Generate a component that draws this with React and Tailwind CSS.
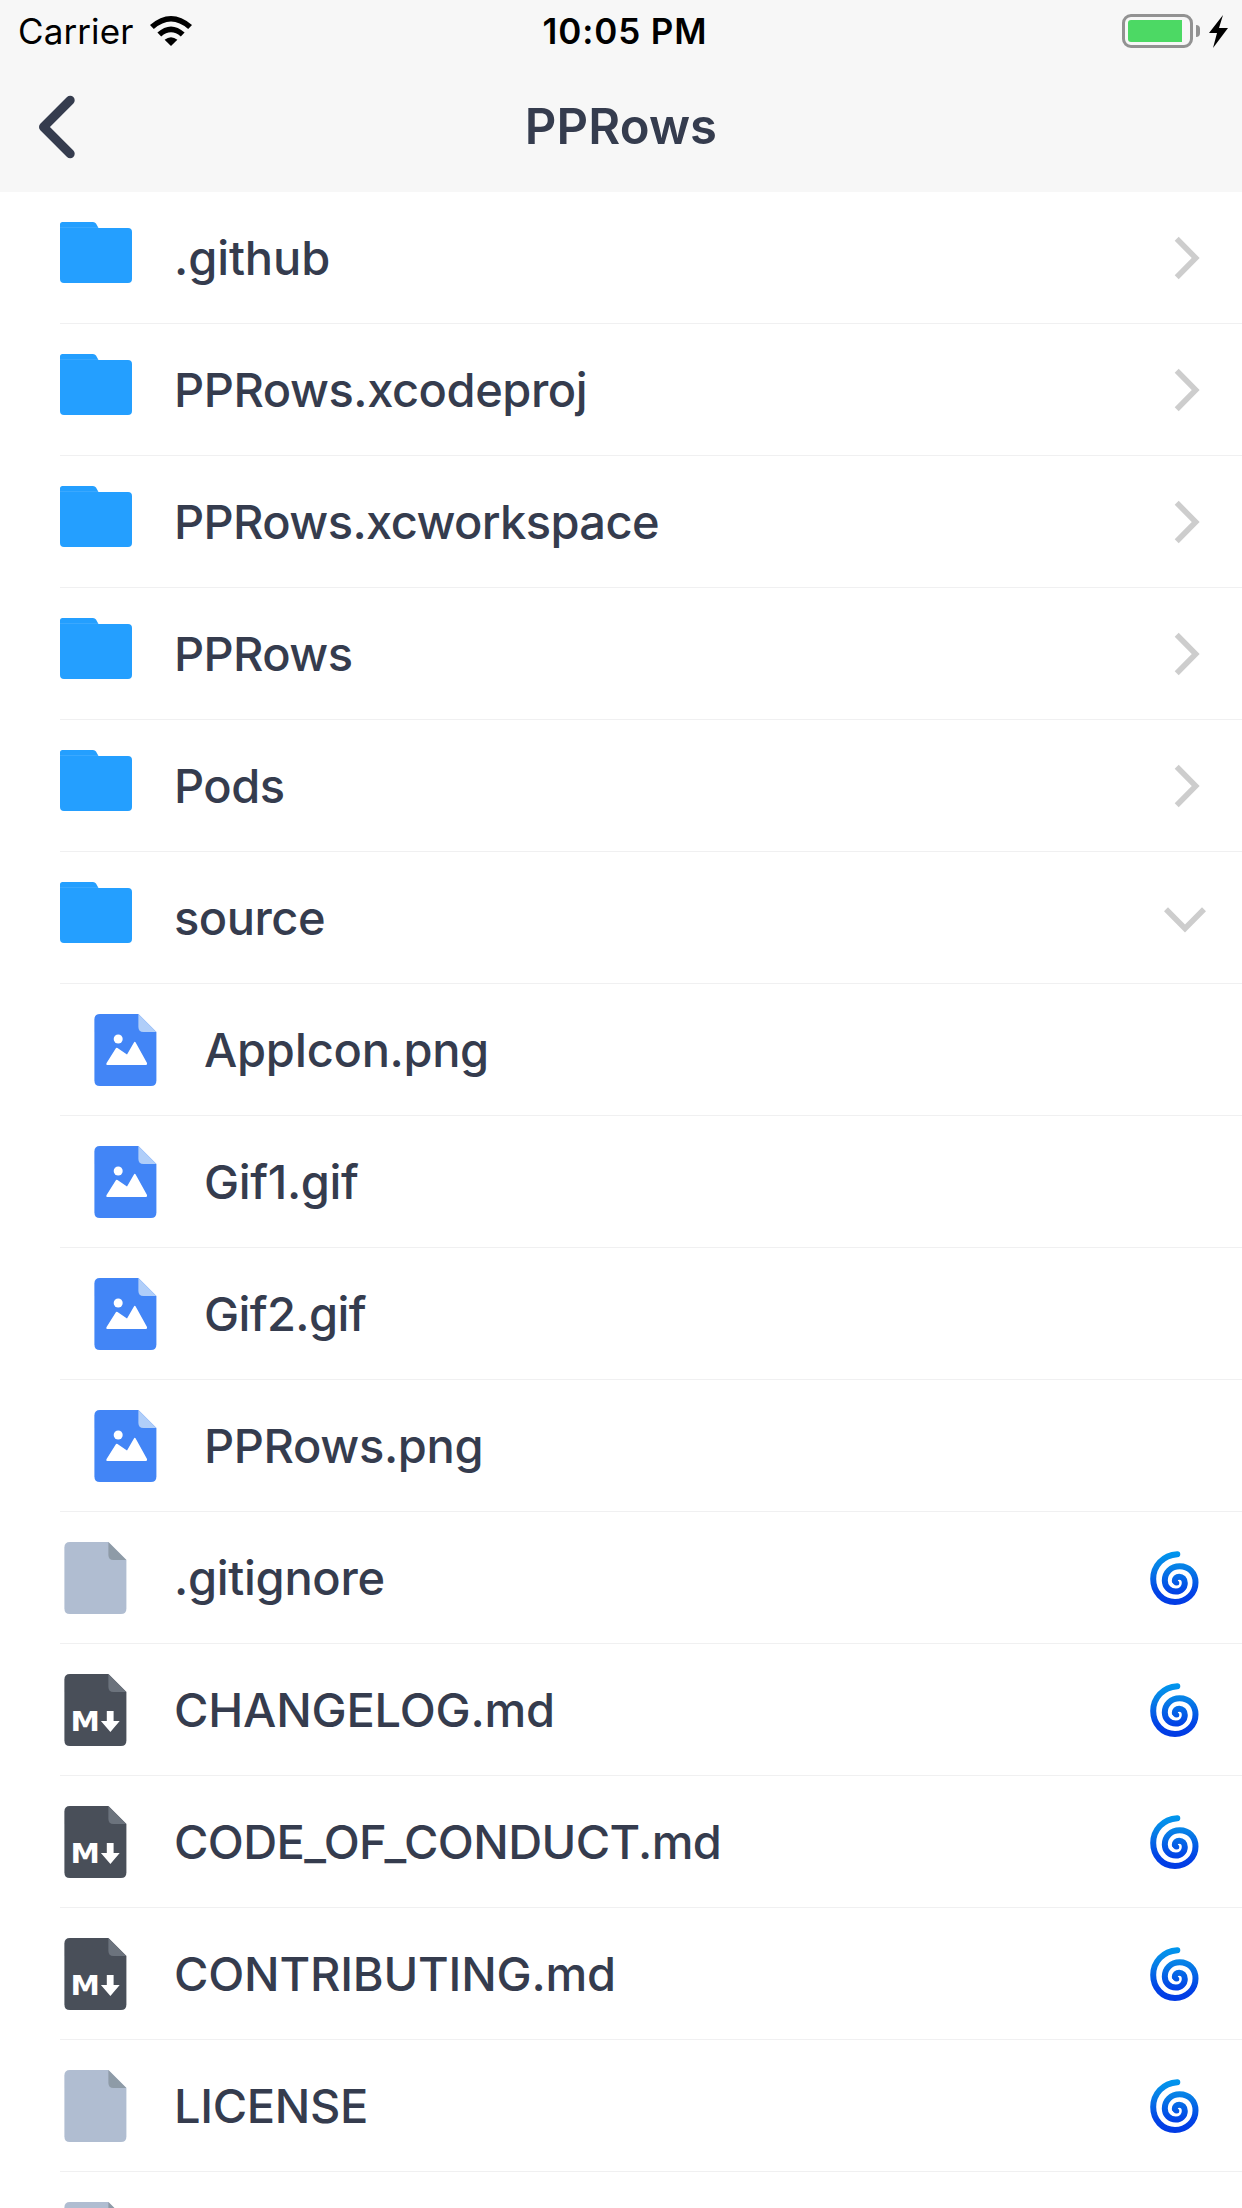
const files = [
  { name: ".github", type: "folder", tracking: "tracking-[-0.1px]" },
  { name: "PPRows.xcodeproj", type: "folder", tracking: "tracking-[-0.44px]" },
  { name: "PPRows.xcworkspace", type: "folder", tracking: "tracking-[-0.6px]" },
  { name: "PPRows", type: "folder", tracking: "tracking-[-0.6px]" },
  { name: "Pods", type: "folder", tracking: "tracking-[-0.5px]" },
  { name: "source", type: "folder", open: true, tracking: "tracking-[-0.5px]" },
  { name: "AppIcon.png", type: "image", tracking: "tracking-[-0.35px]" },
  { name: "Gif1.gif", type: "image", tracking: "tracking-[-0.35px]" },
  { name: "Gif2.gif", type: "image", tracking: "tracking-[-0.6px]" },
  { name: "PPRows.png", type: "image", tracking: "tracking-[-0.35px]" },
  { name: ".gitignore", type: "file", tracking: "tracking-[-0.3px]" },
  { name: "CHANGELOG.md", type: "markdown", tracking: "tracking-[-0.2px]" },
  { name: "CODE_OF_CONDUCT.md", type: "markdown", tracking: "tracking-[-0.6px]" },
  { name: "CONTRIBUTING.md", type: "markdown", tracking: "tracking-[-0.2px]" },
  { name: "LICENSE", type: "file", tracking: "tracking-[-0.35px]" },
  { name: "", type: "file", tracking: "" },
];

const pageColors = {
  image: { page: "#4285f6", fold: "#b0cef9" },
  file: { page: "#b0bdd1", fold: "#8e9ba7" },
  markdown: { page: "#494f59", fold: "#6c737d" },
};

function FolderIcon() {
  return (
    <svg width="72" height="61" viewBox="0 0 72 61" className="shrink-0">
      <path d="M0 2.5Q0 0 2.5 0H33Q35 0 36 1.5L38.5 6H68Q72 6 72 10V57Q72 61 68 61H4Q0 61 0 57Z" fill="#249fff" />
      <path d="M0 5.5H38" stroke="#4aafff" strokeWidth="0.6" />
    </svg>
  );
}

function PageIcon({ type }) {
  const { page, fold } = pageColors[type];
  return (
    <svg width="63" height="72" viewBox="-0.4 0 63 72" className="shrink-0">
      <path d="M5.5 0H44L62 18V66.5Q62 72 56.5 72H5.5Q0 72 0 66.5V5.5Q0 0 5.5 0Z" fill={page} />
      <path d="M44 0L62 18H49Q44 18 44 13Z" fill={fold} />
      {type === "image" && (
        <g fill="#fff">
          <circle cx="23.8" cy="25" r="4.5" />
          <path d="M12.2 49L21.3 34.5Q22 33.4 23.1 34.1L32.6 40.4L39.4 28.7Q40.4 27 41.4 28.7L52.6 49Q53.3 51 51.4 51H13.4Q11.2 51 12.2 49Z" />
        </g>
      )}
      {type === "markdown" && (
        <g fill="#fff">
          <text
            x="6"
            y="57"
            fontSize="27.4"
            fontWeight="700"
            fontFamily="'DejaVu Sans', sans-serif"
            textLength="29.4"
            lengthAdjust="spacingAndGlyphs"
          >
            M
          </text>
          <path d="M42.4 37H49.2V47H55.3L46 58L36.5 47H42.4Z" />
        </g>
      )}
    </svg>
  );
}

function Chevron({ open }) {
  return (
    <svg width="44" height="44" viewBox="0 0 44 44" fill="none" stroke="#cdcdcd" strokeWidth="5.6" className="shrink-0">
      <path d={open ? "M3 13.3L22 32.5L41 13.3" : "M13.7 2.8L32.7 22L13.7 41.2"} />
    </svg>
  );
}

function Cyclone() {
  return (
    <svg width="49" height="55" viewBox="0 0 49 55" fill="none" className="shrink-0">
      <defs>
        <linearGradient id="cyclone" gradientUnits="userSpaceOnUse" x1="0" y1="0" x2="0" y2="55">
          <stop offset="0" stopColor="#0098ee" />
          <stop offset="0.3" stopColor="#0780e6" />
          <stop offset="0.75" stopColor="#0243e6" />
          <stop offset="1" stopColor="#0139e4" />
        </linearGradient>
      </defs>
      <path
        d="M27.3 3.2C13 4 3.2 15 3.2 28C3.2 41 12.5 51 25 51C37 51 45.5 42 45.5 31.5C45.5 22 39 15.2 29.7 15.2C21 15.2 14.8 21.5 14.8 29.5C14.8 36 19.5 40.6 25.8 40.6C31 40.6 34.8 36.8 34.8 32C34.8 28 32.2 25.7 29.2 25.7C26.5 25.7 24.8 27.6 24.8 29.7"
        stroke="url(#cyclone)"
        strokeWidth="6"
        strokeLinecap="round"
      />
      <path d="M24.8 29.7C24.8 31 25.6 32 26.8 32" stroke="url(#cyclone)" strokeWidth="5" strokeLinecap="round" />
    </svg>
  );
}

function StatusBar() {
  return (
    <div className="grid h-[62px] grid-cols-3 items-center text-[35px] leading-none text-black">
      <div className="flex items-center pl-[18px]">
        <span className="w-[132px] tracking-[0.1px]">Carrier</span>
        <svg width="42" height="30" viewBox="0 0 42 30">
          <path d="M0 9Q21 -9 42 9L38.2 13Q21 -2 3.8 13Z" />
          <path d="M7.4 16.6Q21 4.5 34.6 16.6L30.8 20.4Q21 12 11.2 20.4Z" />
          <path d="M14.6 23.8Q21 18.5 27.4 23.8L21 30Z" />
        </svg>
      </div>
      <span className="pl-2 text-center font-semibold tracking-[0.9px]">10:05 PM</span>
      <div className="flex items-center justify-end gap-[3px] pr-3.5">
        <div className="h-[34px] w-[71px] rounded-[9px] border-[3px] border-[#929292] p-[3px]">
          <div className="h-full w-[54px] rounded-l-[3px] bg-[#4cd964]" />
        </div>
        <div className="h-3 w-1 rounded-r-full bg-[#929292]" />
        <svg width="19" height="33" viewBox="0 0 19 33" className="ml-1.5">
          <path d="M14 0L0 18H8L4 33L19 13H10Z" />
        </svg>
      </div>
    </div>
  );
}

function Header() {
  return (
    <header className="h-48 bg-[#f7f7f7]">
      <StatusBar />
      <div className="grid h-[130px] grid-cols-3 items-center">
        <svg width="38" height="64" viewBox="0 0 38 64" fill="none" className="ml-[38px]">
          <path d="M32.2 5.2L5.5 32L32.2 58.8" stroke="#353c4e" strokeWidth="9" strokeLinecap="round" strokeLinejoin="round" />
        </svg>
        <h1 className="pb-0.5 text-center text-[49px] leading-none font-semibold tracking-[0.1px]">PPRows</h1>
      </div>
    </header>
  );
}

function FileRow({ file }) {
  const isFolder = file.type === "folder";
  const isImage = file.type === "image";
  return (
    <li className="ml-[60px] flex h-[132px] items-center border-b border-[#f0f0f1]">
      {isFolder ? (
        <div className="w-[114px] pb-[10px]">
          <FolderIcon />
        </div>
      ) : (
        <div className={isImage ? "w-[144px] pl-[34px]" : "w-[114px] pl-1"}>
          <PageIcon type={file.type} />
        </div>
      )}
      <span className={`grow text-[47px] leading-none font-medium ${file.tracking}`}>{file.name}</span>
      {isFolder && (
        <div className="pr-[35px]">
          <Chevron open={file.open} />
        </div>
      )}
      {!isFolder && !isImage && (
        <div className="pt-0.5 pr-[43px]">
          <Cyclone />
        </div>
      )}
    </li>
  );
}

export default function App() {
  return (
    <div className="h-[2208px] w-[1242px] overflow-hidden bg-white font-[Inter,'Noto_Sans',sans-serif] text-[#353c4e]">
      <Header />
      <ul>
        {files.map((file, i) => (
          <FileRow key={i} file={file} />
        ))}
      </ul>
    </div>
  );
}
